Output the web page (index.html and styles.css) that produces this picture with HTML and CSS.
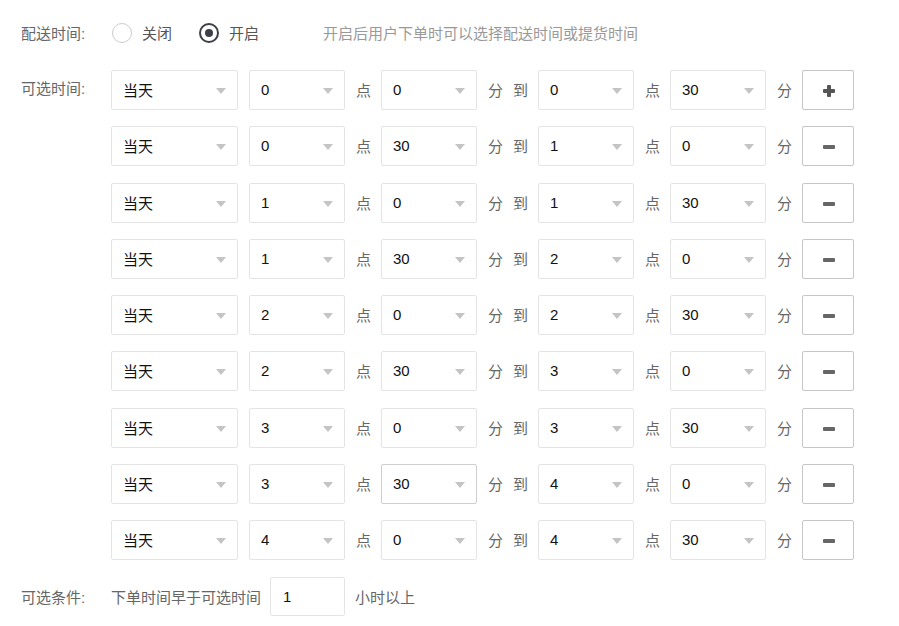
FILE: index.html
```html
<!DOCTYPE html>
<html lang="zh-CN">
<head>
    <meta charset="UTF-8">
    <title>配送时间设置</title>
    <link rel="stylesheet" href="styles.css">
</head>
<body>
<div class="form">
    <div class="form-row top">
        <span class="label">配送时间:</span>
        <span class="radio"><i class="dot"></i>关闭</span>
        <span class="radio checked"><i class="dot"></i>开启</span>
        <span class="hint">开启后用户下单时可以选择配送时间或提货时间</span>
    </div>

    <div class="form-row times">
        <span class="label">可选时间:</span>
        <div class="slots" id="slots"></div>
    </div>

    <div class="form-row cond">
        <span class="label">可选条件:</span>
        <span class="text">下单时间早于可选时间</span>
        <div class="input">1</div>
        <span class="text">小时以上</span>
    </div>
</div>

<script>
    // 时间段数据: [起点, 起分, 止点, 止分]
    var slots = [
        [0, 0, 0, 30], [0, 30, 1, 0], [1, 0, 1, 30], [1, 30, 2, 0],
        [2, 0, 2, 30], [2, 30, 3, 0], [3, 0, 3, 30], [3, 30, 4, 0],
        [4, 0, 4, 30]
    ];
    function sel(v, cls) {
        return '<div class="select ' + (cls || '') + '"><span>' + v + '</span><i class="arrow"></i></div>';
    }
    var html = '';
    slots.forEach(function (s, i) {
        var btn = i === 0
            ? '<div class="btn"><i class="plus"></i></div>'
            : '<div class="btn"><i class="minus"></i></div>';
        html += '<div class="slot">' +
            sel('当天', 'day') + sel(s[0]) + '<span class="unit">点</span>' +
            sel(s[1], i === 7 ? 'hover' : '') + '<span class="unit">分</span><span class="unit">到</span>' +
            sel(s[2]) + '<span class="unit">点</span>' + sel(s[3]) +
            '<span class="unit">分</span>' + btn + '</div>';
    });
    document.getElementById('slots').innerHTML = html;
</script>
</body>
</html>
```

FILE: styles.css
```css
body {
    margin: 0;
    font-family: "Liberation Sans", "Noto Sans CJK SC", sans-serif;
    font-size: 15px;
    color: #333;
    background: #fff;
}
.form {
    padding: 18px 0 0 21px;
}
.form-row {
    display: flex;
    align-items: center;
}
.label {
    width: 90px;
    flex-shrink: 0;
    color: #666;
}
.top {
    height: 28px;
    margin-bottom: 24px;
}
.radio {
    display: flex;
    align-items: center;
    color: #555;
    margin-right: 26px;
}
.radio .dot {
    width: 18px;
    height: 18px;
    border: 1px solid #ccc;
    border-radius: 50%;
    margin: 2px 10px 0 1px;
    position: relative;
}
.radio.checked .dot {
    border: 2px solid #3c3f46;
    width: 16px;
    height: 16px;
}
.radio.checked .dot::after {
    content: "";
    position: absolute;
    left: 4px;
    top: 4px;
    width: 8px;
    height: 8px;
    border-radius: 50%;
    background: #3c3f46;
}
.hint {
    margin-left: 38px;
    color: #999;
}
.times {
    align-items: flex-start;
}
.times .label {
    line-height: 38px;
}
.slot {
    display: flex;
    align-items: center;
    gap: 11px;
    margin-bottom: 16.25px;
}
.select {
    box-sizing: border-box;
    width: 96px;
    height: 40px;
    border: 1px solid #e4e4e4;
    border-radius: 2px;
    display: flex;
    align-items: center;
    padding: 0 0 1px 11px;
    color: #111;
    position: relative;
}
.select.day {
    width: 127px;
}
.select.hover {
    border-color: #cfcfcf;
}
.arrow {
    position: absolute;
    right: 11px;
    top: 17px;
    border-left: 5.5px solid transparent;
    border-right: 5.5px solid transparent;
    border-top: 6px solid #c4c4c4;
}
.unit {
    color: #666;
    width: 14px;
    margin-top: -1px;
}
.btn {
    box-sizing: border-box;
    width: 52px;
    height: 40px;
    border: 1px solid #c6c6c6;
    border-radius: 2px;
    position: relative;
}
.plus, .minus {
    position: absolute;
    left: 20px;
    top: 18px;
    width: 12px;
    height: 4px;
    background: #555;
    border-radius: 1px;
}
.plus::after {
    content: "";
    position: absolute;
    left: 4px;
    top: -4px;
    width: 4px;
    height: 12px;
    background: #555;
    border-radius: 1px;
}
.minus {
    background: #666;
}
.cond {
    margin-top: 1px;
}
.text {
    color: #666;
    margin-top: -1px;
}
.input {
    box-sizing: border-box;
    width: 75px;
    height: 39px;
    border: 1px solid #e4e4e4;
    border-radius: 2px;
    margin: 0 10px 0 9px;
    padding-left: 12px;
    display: flex;
    align-items: center;
    color: #111;
}
```
